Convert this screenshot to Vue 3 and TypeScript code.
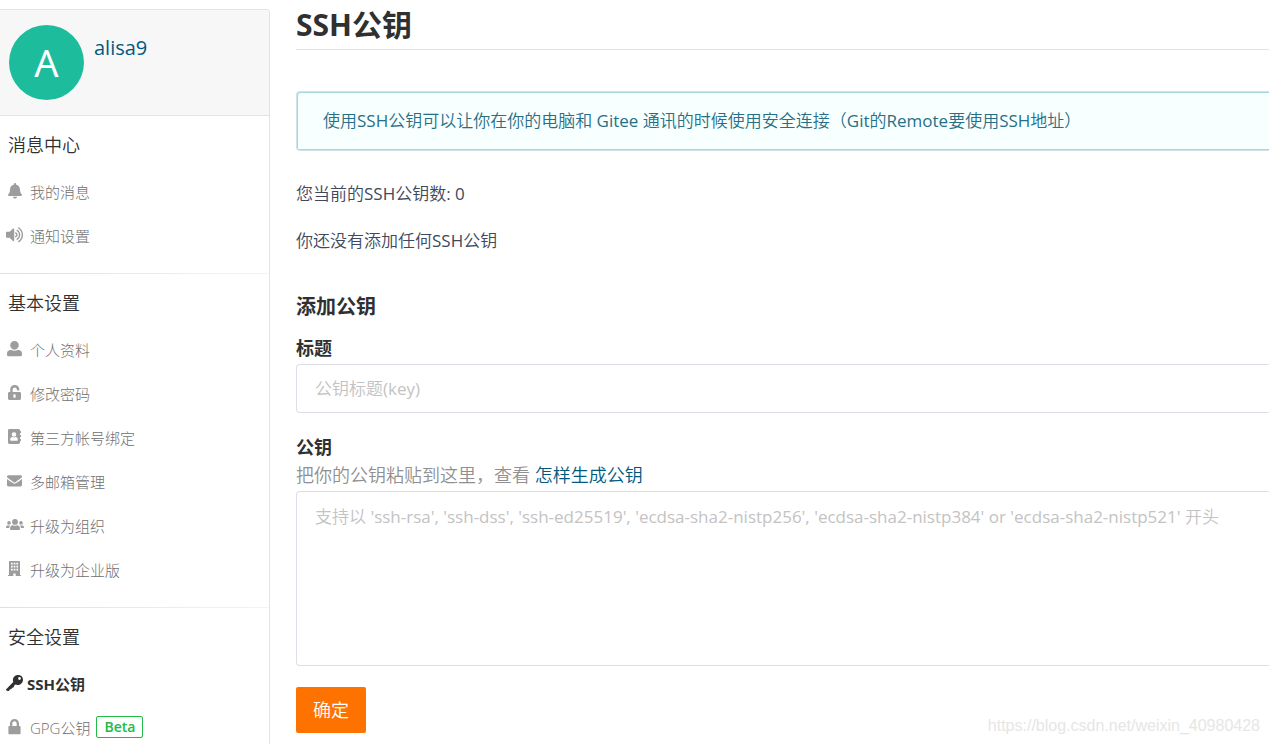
<script setup lang="ts">
import { ref } from 'vue'

type IconName =
  | 'bell' | 'volume' | 'user' | 'unlock' | 'book'
  | 'mail' | 'users' | 'building' | 'key' | 'lock'

interface MenuItem {
  label: string
  icon: IconName
  active?: boolean
  badge?: string
}

interface MenuSection {
  title: string
  items: MenuItem[]
}

/* Every icon is drawn on an 18 x 16 grid. */
const icons: Record<IconName, string> = {
  bell: 'M9 0c.6 0 1 .4 1 1v.6c2.300.5 4 2.400 4 4.900 0 3.200 1.100 4.200 1.700 4.800.6.7.2 1.700-.8 1.700H3.100c-1 0-1.400-1-.8-1.700C2.900 10.700 4 9.700 4 6.500c0-2.500 1.700-4.400 4-4.900V1c0-.6.4-1 1-1zM7 13.700h4c0 1.100-.9 1.900-2 1.900s-2-.8-2-1.900z',
  volume: 'M0 5.500c0-.4.3-.7.7-.7h2.900L7 1.600c.5-.4 1.200-.1 1.200.5v11.300c0 .6-.7 1-1.200.5l-3.400-3.200H.7c-.4 0-.7-.3-.7-.7zM10 5.300c1 .5 1.600 1.400 1.600 2.500s-.6 2-1.600 2.500c-.8.4-1.500-.8-.7-1.200.5-.3.9-.7.9-1.300s-.4-1-.9-1.300c-.8-.4-.1-1.600.7-1.200zM11.600 2.800c1.700 1.100 2.700 3 2.700 5s-1 3.900-2.700 5c-.8.500-1.600-.7-.8-1.200 1.300-.8 2.100-2.200 2.100-3.800s-.8-3-2.100-3.800c-.8-.5 0-1.700.8-1.200zM13.200.4c2.500 1.700 3.900 4.400 3.900 7.400s-1.400 5.700-3.900 7.400c-.8.500-1.600-.7-.8-1.200 2.100-1.400 3.300-3.700 3.300-6.200s-1.200-4.800-3.300-6.200c-.8-.5 0-1.700.8-1.200z',
  user: 'M8.500 0C10.900 0 12.800 1.900 12.800 4.300S10.900 8.700 8.500 8.700 4.200 6.700 4.200 4.300 6.100 0 8.500 0zM5 8.800c2.100 1.400 4.900 1.400 7 0l1.600.4c1.400.4 2.400 1.600 2.400 3V14c0 .7-.6 1.200-1.300 1.200H2.300C1.600 15.200 1 14.700 1 14v-1.800c0-1.400 1-2.600 2.400-3z',
  unlock: 'M4.200 7V4.700C4.200 2.100 6.200 0 8.800 0s4.600 2 4.600 4.600c0 .6-.3.9-.8.9h-.9c-.5 0-.8-.3-.8-.8 0-1.200-.9-2.200-2.100-2.200S6.600 3.500 6.600 4.700V7h7c.8 0 1.400.6 1.400 1.400v5.200c0 .8-.6 1.400-1.400 1.400H3.400c-.8 0-1.400-.6-1.400-1.400V8.400C2 7.600 2.600 7 3.400 7zm4.300 2.300c-.7 0-1.200.5-1.200 1.200v1.200c0 .7.5 1.200 1.200 1.200s1.200-.5 1.200-1.200v-1.200c0-.7-.5-1.200-1.200-1.200z',
  book: 'M3.400 0h9.200c.8 0 1.400.6 1.400 1.400V2h.6c.3 0 .4.2.4.400v1.400c0 .3-.2.4-.4.4H14V6h.6c.3 0 .4.2.4.4v1.400c0 .3-.2.4-.4.4H14V10h.6c.3 0 .4.2.4.4v1.400c0 .3-.2.4-.4.4H14v1.400c0 .8-.6 1.400-1.400 1.400H3.400C2.600 15 2 14.400 2 13.600V1.400C2 .6 2.600 0 3.400 0zM8 3.200a2.300 2.300 0 1 0 0 4.600 2.300 2.300 0 0 0 0-4.600zM6.400 8C5 8.300 4.200 9.200 4.200 10.400v.6c0 .4.4.7.8.7h6c.4 0 .8-.3.8-.7v-.6c0-1.200-.8-2.100-2.200-2.400-1 .6-2.200.6-3.200 0z',
  mail: 'M2.400 2.300h12.200c.8 0 1.400.6 1.400 1.400v.5c-1.700 1.400-3.400 2.600-5.600 4.200-.5.400-1.300 1-1.900 1s-1.400-.6-1.900-1C4.400 6.800 2.700 5.600 1 4.200v-.5c0-.8.6-1.400 1.400-1.400zM1 5.900c1.400 1.100 3 2.200 5 3.700.6.4 1.500 1.200 2.500 1.200s1.900-.8 2.500-1.200c2-1.500 3.600-2.600 5-3.700V12c0 .8-.6 1.400-1.400 1.400H2.400C1.600 13.400 1 12.800 1 12z',
  users: 'M9 2a2.900 2.900 0 1 1 0 5.800A2.900 2.900 0 0 1 9 2zM3 4.100A1.800 1.800 0 1 1 3 7.700a1.800 1.800 0 0 1 0-3.600zM15 4.100a1.800 1.800 0 1 1 0 3.600 1.800 1.800 0 0 1 0-3.600zM6.900 8.200c1.300.8 2.900.8 4.200 0 1.600 0 2.800 1.200 2.800 2.800v1c0 .6-.5 1-1 1H5.100c-.5 0-1-.4-1-1v-1c0-1.600 1.200-2.800 2.800-2.800zM1.800 8.400h2.400c-.6.6-1 1.500-1.100 2.600H.6c-.3 0-.6-.3-.6-.6v-.3c0-1 .8-1.700 1.800-1.700zM16.200 8.400h-2.400c.6.6 1 1.500 1.100 2.600h2.500c.3 0 .6-.3.6-.6v-.3c0-1-.8-1.700-1.800-1.700z',
  building: 'M3.700 0h9.600c.4 0 .7.3.7.7V14.100h.6c.2 0 .4.200.4.400v.5H9.700v-2.500H7.300V15H2v-.5c0-.2.200-.4.400-.4H3V.7c0-.4.300-.7.700-.7zM5 1.800v1.700h1.700V1.800zm2.700 0v1.700h1.700V1.800zm2.700 0v1.700h1.700V1.800zM5 4.800v1.700h1.700V4.800zm2.700 0v1.700h1.700V4.800zm2.700 0v1.700h1.700V4.800zM5 7.800v1.700h1.700V7.800zm2.700 0v1.700h1.700V7.800zm2.700 0v1.700h1.700V7.800z',
  key: 'M12 0c3 0 5 1.900 5 4.700C17 7.800 14.400 10 11.500 10c-.8 0-1.500-.1-2.200-.4L7.900 11l.2.900-2.200 1-.4 1.200-1.800.4-.4.9c-.3.5-1 .7-1.500.5l-1.300-.4c-.5-.2-.6-.8-.3-1.200l7.100-7.200C7 6.500 6.900 5.900 6.900 5.100 6.900 2.300 9.200 0 12 0zM13.500 2.100a1.400 1.400 0 1 0 0 2.800 1.400 1.400 0 0 0 0-2.800z',
  lock: 'M4 7V4.600C4 2 6 0 8.500 0S13 2 13 4.600V7h.6c.6 0 1 .5 1 1v6.200c0 .6-.5 1-1 1H3.400c-.6 0-1-.4-1-1V8c0-.6.400-1 1-1zm2.300 0h4.400V4.600c0-1.300-.9-2.300-2.200-2.300S6.300 3.300 6.300 4.600z',
}

const sections: MenuSection[] = [
  {
    title: '消息中心',
    items: [
      { label: '我的消息', icon: 'bell' },
      { label: '通知设置', icon: 'volume' },
    ],
  },
  {
    title: '基本设置',
    items: [
      { label: '个人资料', icon: 'user' },
      { label: '修改密码', icon: 'unlock' },
      { label: '第三方帐号绑定', icon: 'book' },
      { label: '多邮箱管理', icon: 'mail' },
      { label: '升级为组织', icon: 'users' },
      { label: '升级为企业版', icon: 'building' },
    ],
  },
  {
    title: '安全设置',
    items: [
      { label: 'SSH公钥', icon: 'key', active: true },
      { label: 'GPG公钥', icon: 'lock', badge: 'Beta' },
    ],
  },
]

const keyCount = ref(0)
const title = ref('')
const publicKey = ref('')
</script>

<template>
  <div class="page">
    <aside class="sidebar">
      <header class="profile">
        <span class="avatar">A</span>
        <a class="username" href="#">alisa9</a>
      </header>
      <nav>
        <section v-for="section in sections" :key="section.title" class="section">
          <h2 class="section-title">{{ section.title }}</h2>
          <ul class="menu">
            <li v-for="item in section.items" :key="item.label">
              <a class="item" :class="{ active: item.active }" href="#">
                <svg class="icon" viewBox="0 0 18 16" aria-hidden="true">
                  <path :d="icons[item.icon]" fill-rule="evenodd" />
                </svg>
                <span>{{ item.label }}</span>
                <span v-if="item.badge" class="badge">{{ item.badge }}</span>
              </a>
            </li>
          </ul>
        </section>
      </nav>
    </aside>

    <main class="content">
      <h1 class="heading">SSH公钥</h1>
      <div class="notice">使用SSH公钥可以让你在你的电脑和 Gitee 通讯的时候使用安全连接（Git的Remote要使用SSH地址）</div>
      <p class="status">您当前的SSH公钥数: {{ keyCount }}</p>
      <p class="status">你还没有添加任何SSH公钥</p>

      <form class="form" @submit.prevent>
        <h3 class="form-title">添加公钥</h3>
        <label class="label" for="key-title">标题</label>
        <input id="key-title" v-model="title" class="control" type="text" placeholder="公钥标题(key)" />
        <label class="label key-label" for="key-body">公钥</label>
        <p class="help">把你的公钥粘贴到这里，查看 <a href="#">怎样生成公钥</a></p>
        <textarea
          id="key-body"
          v-model="publicKey"
          class="control area"
          placeholder="支持以 'ssh-rsa', 'ssh-dss', 'ssh-ed25519', 'ecdsa-sha2-nistp256', 'ecdsa-sha2-nistp384' or 'ecdsa-sha2-nistp521' 开头"
        ></textarea>
        <button class="submit" type="submit">确定</button>
      </form>
    </main>

    <span class="watermark">https://blog.csdn.net/weixin_40980428</span>
  </div>
</template>

<style>
body {
  margin: 0;
  background: #fff;
}
</style>

<style scoped>
.page,
.page * {
  box-sizing: border-box;
}

.page {
  position: relative;
  display: flex;
  height: 100vh;
  overflow: hidden;
  color: #40485b;
  font-family: "Open Sans", "Noto Sans CJK SC DemiLight", "Noto Sans CJK SC", sans-serif;
  font-size: 17px;
  font-weight: 400;
}

h1,
h2,
h3,
p,
ul {
  margin: 0;
  padding: 0;
}

a {
  color: #005980;
  text-decoration: none;
}

.sidebar {
  flex: 0 0 270px;
  align-self: flex-start;
  margin-top: 9px;
  border: 1px solid #e3e3e3;
  border-left: 0;
  border-top-right-radius: 4px;
}

.profile {
  display: flex;
  gap: 10px;
  padding: 15px 9px;
  border-bottom: 1px solid #e3e3e3;
  border-top-right-radius: 4px;
  background: #f7f7f7;
}

.avatar {
  width: 75px;
  height: 75px;
  border-radius: 50%;
  background: #1dbc9c;
  color: #fff;
  font-family: "Noto Sans", sans-serif;
  font-size: 38px;
  line-height: 75px;
  text-align: center;
}

.username {
  font-size: 20px;
  line-height: 46px;
}

.section {
  padding: 14px 0 16px;
}

.section + .section::before {
  content: "";
  display: block;
  height: 1px;
  margin: 0 0 14px;
  background: linear-gradient(to right, #e0e0e0, #f4f4f4);
}

.section + .section {
  padding-top: 0;
}

.section-title {
  padding-left: 8px;
  color: #303030;
  font-size: 18px;
  font-weight: 350;
  line-height: 30px;
}

.menu {
  margin-top: 9px;
  list-style: none;
}

.item {
  display: flex;
  align-items: center;
  gap: 6px;
  height: 44px;
  padding-left: 6px;
  color: #707070;
  font-family: "Open Sans", "Noto Sans CJK SC", sans-serif;
  font-size: 15px;
  font-weight: 300;
}

.item.active {
  gap: 3px;
  color: #303030;
  font-weight: 700;
}

.icon {
  width: 18px;
  height: 16px;
  fill: #9d9d9d;
}

.item.active .icon {
  fill: #303030;
}

.badge {
  padding: 0 7px;
  border: 1px solid #21ba45;
  border-radius: 2px;
  color: #21ba45;
  font-size: 14px;
  font-weight: 600;
  line-height: 20px;
}

.content {
  flex: 1;
  min-width: 0;
  padding-left: 26px;
}

.heading,
.form-title,
.label {
  color: #303030;
  font-family: "Open Sans", "Noto Sans CJK SC", sans-serif;
  font-weight: 700;
}

.heading {
  height: 50px;
  border-bottom: 1px solid #e3e3e3;
  font-size: 30px;
  line-height: 50px;
}

.notice {
  margin-top: 41px;
  padding: 14px 26px;
  border: 1px solid #cfe3e8;
  border-right: 0;
  border-radius: 4px 0 0 4px;
  background: #f8ffff;
  box-shadow: inset 1px 1px #a9d5de, inset 0 -1px #a9d5de;
  color: #276f86;
  line-height: 30px;
}

.status {
  margin-top: 19px;
  line-height: 28px;
}

.notice + .status {
  margin-top: 29px;
}

.form {
  display: flex;
  flex-direction: column;
  align-items: stretch;
  margin-top: 38px;
}

.form-title {
  font-size: 20px;
  line-height: 28px;
}

.label {
  margin-top: 13px;
  font-size: 18px;
  line-height: 28px;
}

.key-label {
  margin-top: 20px;
}

.help {
  color: #909090;
  font-size: 18px;
  line-height: 28px;
}

.control {
  height: 49px;
  margin: 2px 0 0;
  padding: 0 18px;
  border: 1px solid #dcdfe6;
  border-right: 0;
  border-radius: 4px 0 0 4px;
  outline: none;
  background: #fff;
  color: #40485b;
  font: inherit;
}

.control::placeholder {
  color: #c3c3c3;
  opacity: 1;
}

.area {
  height: 175px;
  padding: 11px 18px;
  line-height: 28px;
  resize: none;
}

.submit {
  align-self: flex-start;
  margin-top: 21px;
  padding: 9px 17px;
  border: 0;
  border-radius: 2px;
  background: #fe7300;
  color: #fff;
  font: inherit;
  font-size: 18px;
  line-height: 28px;
}

.watermark {
  position: absolute;
  right: 9px;
  bottom: 8px;
  color: #e6e6e6;
  font-family: "Liberation Sans", Arial, sans-serif;
  font-size: 16px;
  line-height: 20px;
}
</style>
